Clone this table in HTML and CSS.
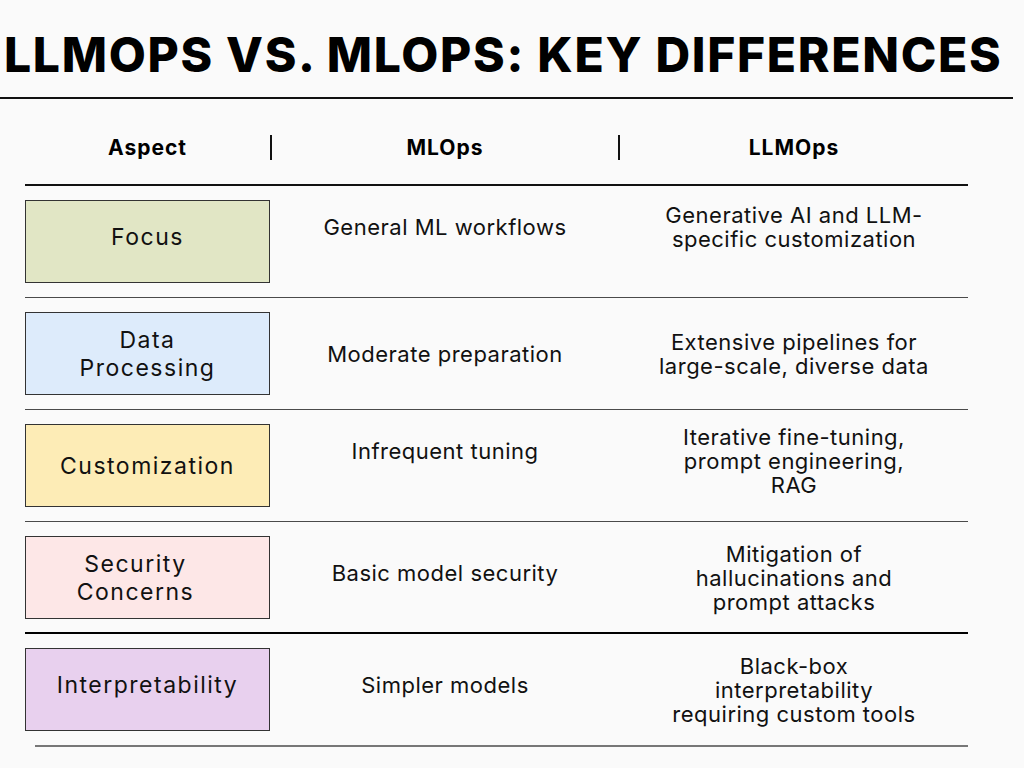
FILE: index.html
```html
<!DOCTYPE html>
<html lang="en">
<head>
<meta charset="utf-8">
<title>LLMOps vs. MLOps: Key Differences</title>
<link rel="stylesheet" href="styles.css">
</head>
<body>
<main class="page">
  <h1 class="title">LLMOPS VS. MLOPS: KEY DIFFERENCES</h1>
  <div class="title-rule"></div>

  <section class="table">
    <div class="thead">
      <div class="th th--aspect">Aspect</div>
      <span class="sep"></span>
      <div class="th th--ml">MLOps</div>
      <span class="sep"></span>
      <div class="th th--llm">LLMOps</div>
    </div>

    <div class="row">
      <div class="label label--focus"><span class="label-text up-sm">Focus</span></div>
      <div class="cell up">General ML workflows</div>
      <div class="cell up">Generative AI and LLM-<br>specific customization</div>
    </div>

    <div class="row">
      <div class="label label--data"><span class="label-text">Data<br>Processing</span></div>
      <div class="cell">Moderate preparation</div>
      <div class="cell">Extensive pipelines for<br>large-scale, diverse data</div>
    </div>

    <div class="row">
      <div class="label label--custom"><span class="label-text">Customization</span></div>
      <div class="cell up">Infrequent tuning</div>
      <div class="cell up-sm">Iterative fine-tuning,<br>prompt engineering,<br>RAG</div>
    </div>

    <div class="row row--strong">
      <div class="label label--security"><span class="label-text shift-left">Security<br>Concerns</span></div>
      <div class="cell up-sm">Basic model security</div>
      <div class="cell">Mitigation of<br>hallucinations and<br>prompt attacks</div>
    </div>

    <div class="row row--last">
      <div class="label label--interp"><span class="label-text up-sm">Interpretability</span></div>
      <div class="cell up-sm">Simpler models</div>
      <div class="cell">Black-box<br>interpretability<br>requiring custom tools</div>
    </div>
    <div class="end-rule"></div>
  </section>
</main>
</body>
</html>
```

FILE: styles.css
```css
html, body {
  margin: 0;
  padding: 0;
  background: #fafafa;
}

body {
  font-family: "Inter", "Open Sans", sans-serif;
  color: #111;
  width: 1024px;
  height: 768px;
  overflow: hidden;
}

.page {
  display: flex;
  flex-direction: column;
}

.title {
  margin: 26px 0 0 4px;
  font-size: 48px;
  line-height: 58px;
  font-weight: 800;
  color: #000;
  white-space: nowrap;
  letter-spacing: 1.7px;
}

.title-rule {
  margin-top: 13px;
  width: 1013px;
  height: 2px;
  background: #111;
}

.table {
  margin-left: 25px;
  width: 943px;
  display: flex;
  flex-direction: column;
}

.thead {
  height: 87px;
  box-sizing: border-box;
  padding-top: 11px;
  display: flex;
  align-items: center;
  border-bottom: 2px solid #111;
}

.th {
  font-weight: 700;
  font-size: 21px;
  letter-spacing: 1px;
  text-align: center;
  color: #000;
}

.th--aspect { width: 245px; }
.th--ml { width: 346px; }
.th--llm { width: 348px; }

.sep {
  width: 2px;
  height: 25px;
  background: #111;
}

.row {
  display: grid;
  grid-template-columns: 245px 350px 348px;
  padding: 14px 0;
  border-bottom: 1px solid #4a4a4a;
  align-items: center;
}

.row--strong {
  border-bottom: 2px solid #000;
  padding-bottom: 13px;
}

.row--last {
  border-bottom: none;
}

.end-rule {
  margin-left: 10px;
  width: 933px;
  height: 1.5px;
  background: #777;
}

.label {
  height: 83px;
  box-sizing: border-box;
  border: 1px solid #333;
  display: flex;
  align-items: center;
  justify-content: center;
  text-align: center;
  font-size: 23px;
  line-height: 28px;
  letter-spacing: 1.5px;
  color: #111;
}

.label--focus { background: #e1e6c5; }
.label--data { background: #ddebfb; }
.label--custom { background: #fdecb6; }
.label--security { background: #fde7e7; }
.label--interp { background: #e8d0ee; }

.cell {
  text-align: center;
  font-size: 22px;
  line-height: 24px;
  letter-spacing: 0.5px;
  color: #111;
}

.up { margin-bottom: 30px; }
.up-sm { margin-bottom: 10px; }
.shift-left { margin-right: 24px; }
```
